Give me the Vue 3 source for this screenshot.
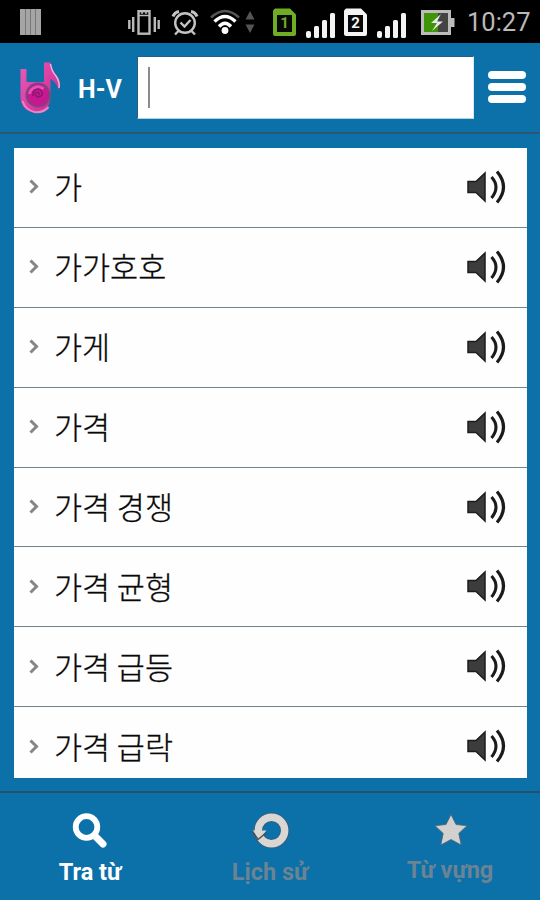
<template>
  <div class="screen">
    <div class="status-bar">
      <svg class="bars" width="21" height="26" viewBox="0 0 21 26">
        <rect width="21" height="26" fill="#a5a5a5" />
        <path d="M5.5 0v26M10.5 0v26M15.5 0v26" stroke="#777" stroke-width="1" />
      </svg>
      <div class="status-icons">
        <svg class="vibrate" width="32" height="27" viewBox="0 0 32 27" fill="none" stroke="#b9b9b9" stroke-width="2.4">
          <path d="M1.3 11v9M5.2 8v15M26.8 8v15M30.7 11v9" />
          <rect x="10.5" y="2.2" width="11" height="22.5" />
          <path d="M10 6.5h11M13 4h2M17 4h2" stroke-width="1.5" />
        </svg>
        <svg class="alarm" width="28" height="27" viewBox="0 0 28 27" fill="none" stroke="#c4c4c4" stroke-width="2.4">
          <circle cx="14" cy="14" r="9.8" />
          <path d="M9.5 13.5l4 4 6-6.5M8 21.5l-4 4M20 21.5l4 4" />
          <path d="M2 7.5a8 8 0 0 1 6-5M26 7.5a8 8 0 0 0-6-5" stroke-width="3.2" />
        </svg>
        <svg class="wifi" width="30" height="27" viewBox="0 0 30 27" fill="none" stroke-width="3.4">
          <path d="M1 8.5Q15-4.5 29 8.5" stroke="#555" stroke-width="2.4" />
          <path d="M4.5 12.5Q15 2.5 25.5 12.5" stroke="#fff" />
          <path d="M9 17.5Q15 11 21 17.5" stroke="#fff" />
          <circle cx="15" cy="21.5" r="3.4" fill="#fff" />
        </svg>
        <svg class="arrows" width="10" height="22" viewBox="0 0 10 22" fill="#555">
          <path d="M5 0l4.500 8.500h-9zM5 22l4.500-8.500h-9z" />
        </svg>
        <template v-for="sim in sims" :key="sim.id">
          <svg class="sim" width="23" height="28" viewBox="0 0 23 28">
            <path d="M2 0.500h15l6 6V26a2 2 0 0 1-2 2H2a2 2 0 0 1-2-2V2.500z" :fill="sim.color" />
            <rect x="4" y="7" width="15" height="17" fill="#080808" />
            <text x="11.5" y="20" text-anchor="middle" :fill="sim.color">{{ sim.id }}</text>
          </svg>
          <svg class="signal" width="29" height="25" viewBox="0 0 29 25" fill="#f4f4f4">
            <rect x="0" y="18" width="5" height="7" rx="2" />
            <rect x="8" y="13" width="5" height="12" rx="1.5" />
            <rect x="16" y="7" width="5" height="18" rx="1.5" />
            <rect x="24" y="0" width="5" height="25" rx="1.5" />
          </svg>
        </template>
        <svg class="battery" width="34" height="25" viewBox="0 0 34 25">
          <rect x="1.5" y="1.5" width="27" height="22" fill="#444" stroke="#bcbcbc" stroke-width="3" />
          <rect x="3" y="3" width="14" height="19" fill="#3f9408" />
          <rect x="29.5" y="8" width="4" height="9" fill="#bcbcbc" />
          <path d="M20 4l-10 9h6l-5 8 11-9.500h-6z" fill="#e8e8e8" />
        </svg>
        <span class="clock">10:27</span>
      </div>
    </div>

    <header class="header">
      <svg class="logo" width="44" height="54" viewBox="0 0 44 54">
        <defs>
          <linearGradient id="pink" x1="0" y1="0" x2="1" y2="1">
            <stop offset="0" stop-color="#e85cb5" />
            <stop offset="1" stop-color="#cb2590" />
          </linearGradient>
        </defs>
        <path d="M2.500 8h6v13h17.500V1.500h6.500q1 7 5.500 12.500 6 6 2.500 15-2-8-8-11v18q-1 15-14 16Q2.500 50 2.500 36z" fill="url(#pink)" />
        <path d="M32.500 3q1 7 5.500 12 4 6 3 12" fill="none" stroke="#f0b0d8" stroke-width="1.5" />
        <path d="M4.500 40q3 9 12 11 9 1 14-5" fill="none" stroke="#f183c5" stroke-width="2" />
        <circle cx="20" cy="34" r="11.5" fill="#c81791" stroke="#80437f" stroke-width="2" />
        <path d="M11.500 33a8.500 8.500 0 0 1 14-5" fill="none" stroke="#e64fb8" stroke-width="3" />
        <path d="M21 34a2 2 0 1 0-3 1q4 2 6-1 1-5-4-6-6 1-5 7" fill="none" stroke="#8b176f" stroke-width="1.5" />
      </svg>
      <span class="lang">H-V</span>
      <input v-model="query" class="query" type="text" />
      <span class="caret"></span>
      <button class="menu" aria-label="Menu">
        <span v-for="n in 3" :key="n"></span>
      </button>
    </header>

    <main class="content">
      <ul class="words">
        <li v-for="word in filteredWords" :key="word">
          <svg class="chevron" width="11" height="15" viewBox="0 0 11 15">
            <path d="M1.500 1.500l6 6-6 6" fill="none" stroke="#858585" stroke-width="3" />
          </svg>
          <span class="word">{{ word }}</span>
          <svg class="speaker" width="40" height="36" viewBox="0 0 40 36">
            <path d="M1 12.500h8L18 4v28l-9-8.500H1z" fill="#3c3c3c" stroke="#1c1c1c" stroke-width="1.5" />
            <path d="M24.500 8q9 10 0 21" fill="none" stroke="#1b1b1b" stroke-width="3" />
            <path d="M30 2.500q13 15.500 0 31" fill="none" stroke="#1b1b1b" stroke-width="3.2" />
          </svg>
        </li>
      </ul>
    </main>

    <nav class="tabs">
      <button
        v-for="tab in tabs"
        :key="tab.id"
        class="tab"
        :class="[`tab-${tab.id}`, { active: activeTab === tab.id }]"
        @click="activeTab = tab.id"
      >
        <svg v-if="tab.id === 'search'" width="38" height="38" viewBox="0 0 38 38" fill="none" stroke="#fff">
          <circle cx="15.5" cy="15" r="10.8" stroke-width="5.8" />
          <path d="M24 24l8 8" stroke-width="7" stroke-linecap="round" />
        </svg>
        <svg v-else-if="tab.id === 'history'" width="38" height="38" viewBox="0 0 38 38">
          <circle cx="20.5" cy="18.5" r="13.2" fill="none" stroke="#3f5a69" stroke-width="9" />
          <circle cx="20.5" cy="18.5" r="13.2" fill="none" stroke="#d9d7d6" stroke-width="7.4" />
          <path d="M1.500 18.500h14L8 27.500z" fill="#d9d7d6" />
          <path d="M1.500 19.500l5.500 8 8-6.500" fill="none" stroke="#4d4f50" stroke-width="1.5" />
        </svg>
        <svg v-else width="38" height="38" viewBox="0 0 38 38">
          <path
            d="M20 2.500l5 10 11 1.200-8.200 7.700 2.400 11.600L20 27.500 9.800 33l2.400-11.600L4 13.700l11-1.200z"
            fill="#d3d1d0"
            stroke="#4e6470"
            stroke-width=".8"
          />
        </svg>
        <span>{{ tab.label }}</span>
      </button>
    </nav>
  </div>
</template>

<script setup>
import { ref, computed } from 'vue'

const query = ref('')
const activeTab = ref('search')

const sims = [
  { id: 1, color: '#6fae22' },
  { id: 2, color: '#f4f4f4' }
]

const words = ['가', '가가호호', '가게', '가격', '가격 경쟁', '가격 균형', '가격 급등', '가격 급락']

const filteredWords = computed(() => words.filter((word) => word.startsWith(query.value)))

const tabs = [
  { id: 'search', label: 'Tra từ' },
  { id: 'history', label: 'Lịch sử' },
  { id: 'vocabulary', label: 'Từ vựng' }
]
</script>

<style>
body {
  margin: 0;
  background: #0c70a9;
}
</style>

<style scoped>
.screen {
  width: 540px;
  height: 900px;
  display: flex;
  flex-direction: column;
  overflow: hidden;
  background: #0c70a9;
  font-family: Roboto, 'Noto Sans CJK KR', sans-serif;
}

svg {
  display: block;
  flex-shrink: 0;
}

button {
  border: none;
  padding: 0;
  background: none;
  font-family: inherit;
}

.status-bar {
  height: 43px;
  flex-shrink: 0;
  box-sizing: border-box;
  display: flex;
  justify-content: space-between;
  align-items: flex-start;
  padding: 9px 10px 0 20px;
  background: #000;
}

.status-icons {
  display: flex;
  align-items: flex-start;
}

.alarm {
  margin-left: 11px;
}

.wifi {
  margin-left: 11px;
}

.arrows {
  margin: 2px 18px 0 5px;
}

.sim {
  margin-top: -1px;
}

.sim text {
  font: bold 15px Roboto, sans-serif;
}

.signal {
  margin: 4px 9px 0 10px;
}

.battery {
  margin: 1px 12px 0 6px;
}

.clock {
  width: 63px;
  font-size: 25.5px;
  line-height: 27px;
  white-space: nowrap;
  color: #bababa;
}

.header {
  height: 91px;
  flex-shrink: 0;
  box-sizing: border-box;
  position: relative;
  display: flex;
  align-items: flex-start;
  padding: 13px 14px 0 18px;
  border-bottom: 2px solid #2b5774;
}

.logo {
  margin-top: 5px;
}

.lang {
  width: 59px;
  margin-top: 19px;
  padding-left: 16px;
  box-sizing: border-box;
  font-size: 25px;
  line-height: 29px;
  font-weight: 700;
  white-space: nowrap;
  color: #fff;
}

.query {
  width: 337px;
  height: 63px;
  box-sizing: border-box;
  margin-left: 16px;
  padding: 0 12px;
  border: 1px solid #285f80;
  border-right-color: #d8e8f0;
  border-bottom-color: #b6d3e3;
  outline: none;
  background: #fff;
  font-size: 28px;
}

.caret {
  position: absolute;
  left: 148px;
  top: 24px;
  width: 2px;
  height: 41px;
  background: #8b8b8b;
}

.menu {
  display: flex;
  flex-direction: column;
  gap: 4px;
  margin: 15px 0 0 14px;
}

.menu span {
  width: 38px;
  height: 8px;
  border-radius: 4px;
  background: #fff;
}

.content {
  flex: 1;
  min-height: 0;
  padding: 14px 13px 13px 14px;
}

.words {
  height: 100%;
  margin: 0;
  padding: 0;
  list-style: none;
  overflow: hidden;
  background: #fefefe;
}

.words li {
  height: 79.9px;
  box-sizing: border-box;
  display: flex;
  align-items: center;
  padding: 0 20px 1px 15px;
  border-bottom: 1px solid #6e8488;
}

.word {
  flex: 1;
  margin: -1px 0 0 14px;
  font-family: 'Noto Sans CJK KR', sans-serif;
  font-size: 30.5px;
  font-weight: 300;
  line-height: 44px;
  color: #080808;
  -webkit-text-stroke: 0.3px #080808;
}

.tabs {
  height: 109px;
  flex-shrink: 0;
  box-sizing: border-box;
  display: grid;
  grid-template-columns: repeat(3, 1fr);
  border-top: 2px solid #21516f;
}

.tab {
  display: flex;
  flex-direction: column;
  align-items: center;
  justify-content: flex-start;
  padding-top: 19px;
  color: #6a8494;
}

.tab span {
  margin-top: 8px;
  font-size: 23.5px;
  line-height: 28px;
  font-weight: 700;
}

.tab.active {
  color: #fff;
}

.tab-vocabulary span {
  margin-top: 6px;
}
</style>
